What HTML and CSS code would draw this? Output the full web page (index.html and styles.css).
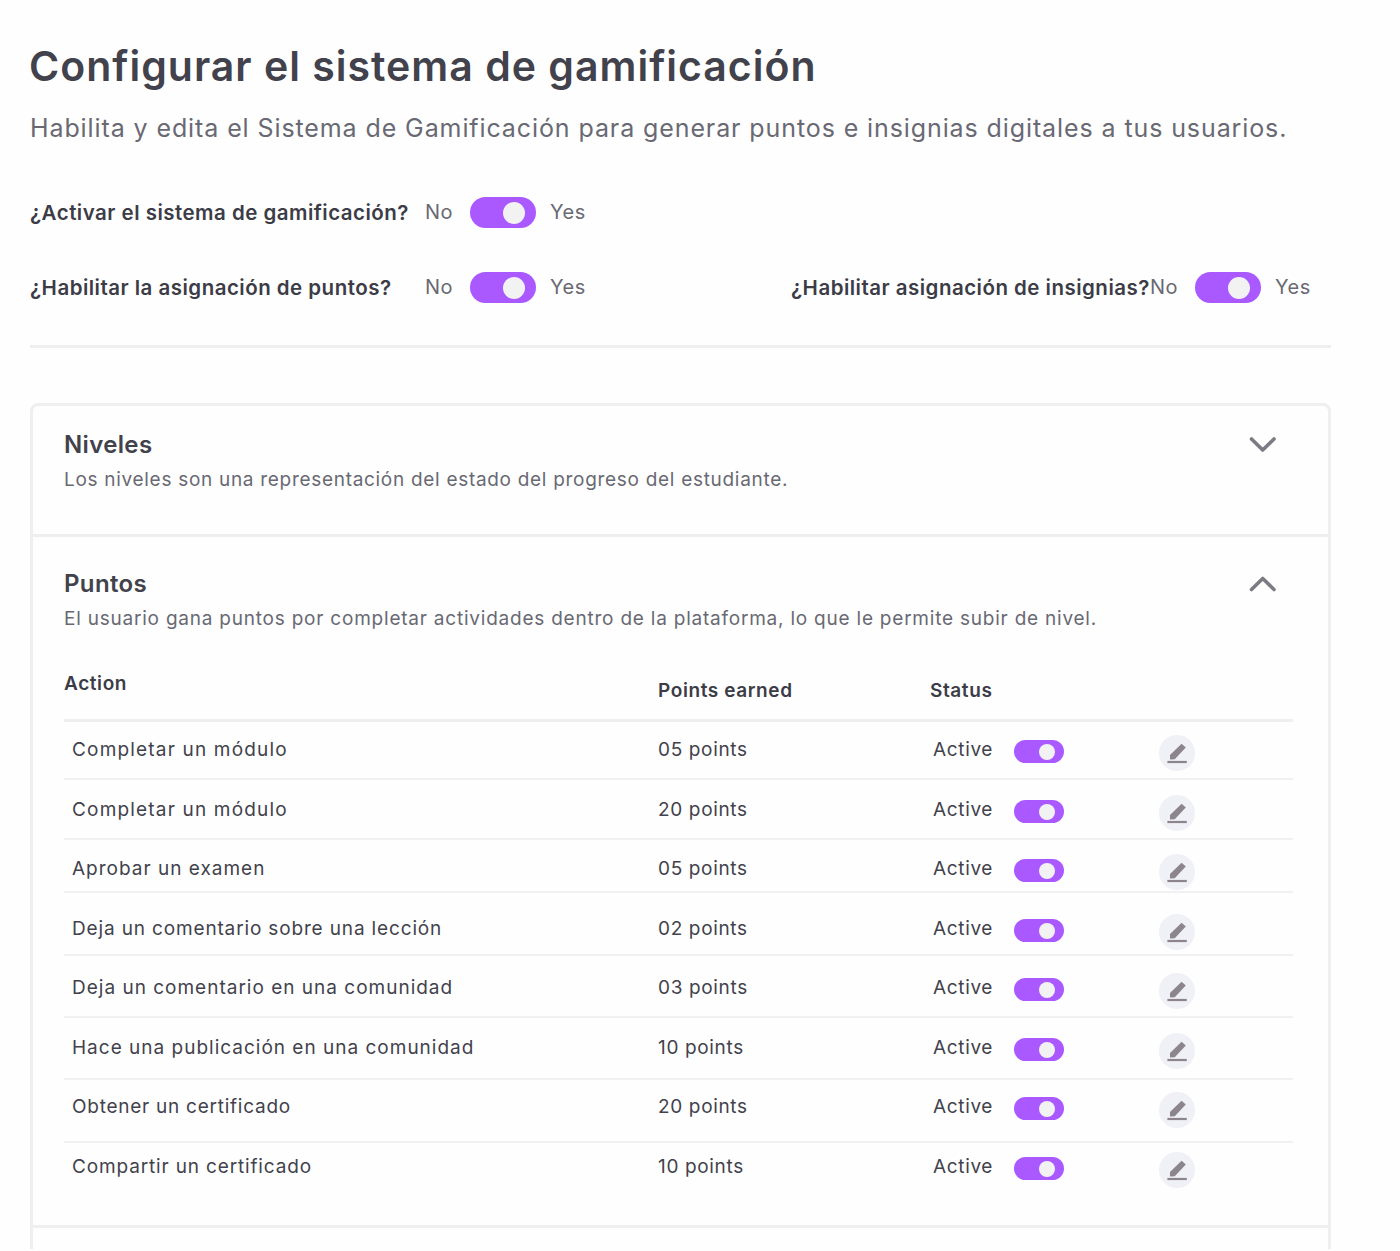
FILE: index.html
```html
<!DOCTYPE html>
<html lang="es">
<head>
    <meta charset="UTF-8">
    <meta name="viewport" content="width=device-width, initial-scale=1.0">
    <title>Sistema de gamificación</title>
    <link rel="stylesheet" href="styles.css">
</head>
<body>

    <!-- Pencil icon shared by every edit button -->
    <svg class="sprite" width="0" height="0">
        <symbol id="icon-edit" viewBox="0 0 36 36">
            <path d="M11 24.5V20L22.6 8.7L26.8 12.6L15.8 24.3Z" fill="#8c858e"/>
            <rect x="8.4" y="25.9" width="19.4" height="2.2" fill="#8c858e"/>
        </symbol>
    </svg>

    <div class="container">
        <h1>Configurar el sistema de gamificación</h1>
        <p class="subtitle">Habilita y edita el Sistema de Gamificación para generar puntos e insignias digitales a tus usuarios.</p>

        <div class="settings">
            <div class="setting">
                <span class="label">¿Activar el sistema de gamificación?</span>
                <span class="no">No</span>
                <span class="toggle"></span>
                <span class="yes">Yes</span>
            </div>
            <div class="setting first-col">
                <span class="label">¿Habilitar la asignación de puntos?</span>
                <span class="no">No</span>
                <span class="toggle"></span>
                <span class="yes">Yes</span>
            </div>
            <div class="setting badges">
                <span class="label">¿Habilitar asignación de insignias?</span>
                <span class="no">No</span>
                <span class="toggle"></span>
                <span class="yes">Yes</span>
            </div>
        </div>

        <div class="card">
            <div class="section levels">
                <div class="section-header">
                    <div>
                        <h2>Niveles</h2>
                        <p class="desc">Los niveles son una representación del estado del progreso del estudiante.</p>
                    </div>
                    <svg class="chevron" width="30" height="20" viewBox="0 0 30 20"><path d="M3.5 4L14.7 15L26 4"/></svg>
                </div>
            </div>

            <div class="section points">
                <div class="section-header">
                    <div>
                        <h2>Puntos</h2>
                        <p class="desc desc-points">El usuario gana puntos por completar actividades dentro de la plataforma, lo que le permite subir de nivel.</p>
                    </div>
                    <svg class="chevron" width="30" height="20" viewBox="0 0 30 20"><path d="M3.5 15.5L14.7 4.5L26 15.5"/></svg>
                </div>

                <div class="points-list">
                    <div class="list-head">
                        <span class="head-action">Action</span>
                        <span>Points earned</span>
                        <span>Status</span>
                    </div>
                    <div class="row">
                        <span class="action">Completar un módulo</span>
                        <span class="earned">05 points</span>
                        <span class="status">Active</span>
                        <span class="toggle small"></span>
                        <span class="edit-btn"><svg width="36" height="36"><use href="#icon-edit"/></svg></span>
                    </div>
                    <div class="row">
                        <span class="action">Completar un módulo</span>
                        <span class="earned">20 points</span>
                        <span class="status">Active</span>
                        <span class="toggle small"></span>
                        <span class="edit-btn"><svg width="36" height="36"><use href="#icon-edit"/></svg></span>
                    </div>
                    <div class="row">
                        <span class="action">Aprobar un examen</span>
                        <span class="earned">05 points</span>
                        <span class="status">Active</span>
                        <span class="toggle small"></span>
                        <span class="edit-btn"><svg width="36" height="36"><use href="#icon-edit"/></svg></span>
                    </div>
                    <div class="row">
                        <span class="action">Deja un comentario sobre una lección</span>
                        <span class="earned">02 points</span>
                        <span class="status">Active</span>
                        <span class="toggle small"></span>
                        <span class="edit-btn"><svg width="36" height="36"><use href="#icon-edit"/></svg></span>
                    </div>
                    <div class="row">
                        <span class="action">Deja un comentario en una comunidad</span>
                        <span class="earned">03 points</span>
                        <span class="status">Active</span>
                        <span class="toggle small"></span>
                        <span class="edit-btn"><svg width="36" height="36"><use href="#icon-edit"/></svg></span>
                    </div>
                    <div class="row">
                        <span class="action">Hace una publicación en una comunidad</span>
                        <span class="earned">10 points</span>
                        <span class="status">Active</span>
                        <span class="toggle small"></span>
                        <span class="edit-btn"><svg width="36" height="36"><use href="#icon-edit"/></svg></span>
                    </div>
                    <div class="row">
                        <span class="action">Obtener un certificado</span>
                        <span class="earned">20 points</span>
                        <span class="status">Active</span>
                        <span class="toggle small"></span>
                        <span class="edit-btn"><svg width="36" height="36"><use href="#icon-edit"/></svg></span>
                    </div>
                    <div class="row">
                        <span class="action">Compartir un certificado</span>
                        <span class="earned">10 points</span>
                        <span class="status">Active</span>
                        <span class="toggle small"></span>
                        <span class="edit-btn"><svg width="36" height="36"><use href="#icon-edit"/></svg></span>
                    </div>
                </div>
            </div>
        </div>
    </div>

</body>
</html>
```
FILE: styles.css
```css
* {
    box-sizing: border-box;
}
body {
    margin: 0;
    background-color: #fefefe;
    font-family: Inter, "Open Sans", sans-serif;
    color: #42424c;
}
h1, h2, p {
    margin: 0;
}
.sprite {
    display: block;
}
.container {
    width: 1331px;
    height: 1249px;
    padding-top: 41px;
    padding-left: 30px;
    overflow: hidden;
}
h1 {
    margin-left: -1px;
    font-size: 41px;
    font-weight: 600;
    line-height: 50px;
    letter-spacing: 1px;
    white-space: nowrap;
}
.subtitle {
    margin-top: 21px;
    font-size: 25px;
    line-height: 32px;
    letter-spacing: 0.9px;
    white-space: nowrap;
    color: #696973;
}

/* Settings */
.settings {
    display: grid;
    grid-template-columns: 761px 1fr;
    row-gap: 44px;
    margin-top: 53px;
    padding-bottom: 42px;
    border-bottom: 3px solid #efefef;
}
.setting {
    display: flex;
    align-items: center;
    height: 31px;
    font-size: 20px;
    letter-spacing: 0.5px;
    white-space: nowrap;
    color: #696973;
}
.first-col {
    grid-column: 1;
}
.label {
    width: 395px;
    padding-bottom: 1px;
    font-size: 20.5px;
    font-weight: 600;
    letter-spacing: 0.48px;
    color: #3c3c47;
}
.badges .label {
    width: 359px;
}
.no {
    width: 45px;
    padding-bottom: 1px;
}
.yes {
    margin-left: 14px;
    padding-bottom: 1px;
}
.toggle {
    display: flex;
    align-items: center;
    justify-content: flex-end;
    width: 66px;
    height: 31px;
    padding-right: 11px;
    border-radius: 16px;
    background-color: #a959ff;
}
.toggle::after {
    content: "";
    width: 22px;
    height: 22px;
    border-radius: 50%;
    background-color: #f3f2f3;
}
.toggle.small {
    width: 50px;
    height: 23px;
    padding-right: 9px;
    margin-top: 5px;
    border-radius: 12px;
}
.toggle.small::after {
    width: 16px;
    height: 16px;
}

/* Sections */
.card {
    height: 900px;
    margin-top: 55px;
    border: 3px solid #efefef;
    border-radius: 8px;
}
.section {
    padding: 0 35px 0 31px;
    border-bottom: 3px solid #efefef;
}
.levels {
    height: 131px;
    padding-top: 23px;
}
.points {
    height: 691px;
    padding-top: 31px;
}
.section-header {
    display: flex;
    justify-content: space-between;
    padding-right: 15px;
    white-space: nowrap;
}
h2 {
    font-size: 24px;
    font-weight: 600;
    line-height: 32px;
    letter-spacing: 0.35px;
}
.desc {
    margin-top: 4px;
    font-size: 19px;
    line-height: 30px;
    letter-spacing: 0.7px;
    color: #696973;
}
.desc-points {
    letter-spacing: 0.78px;
}
.chevron {
    margin-top: 6px;
    fill: none;
    stroke: #7b7b84;
    stroke-width: 3.6;
    stroke-linecap: round;
    stroke-linejoin: round;
}

/* Points list */
.points-list {
    margin-top: 37px;
    font-size: 19px;
    line-height: 28px;
    white-space: nowrap;
}
.list-head {
    display: grid;
    grid-template-columns: 594px 272px 1fr;
    height: 51px;
    padding-top: 6px;
    border-bottom: 3px solid #efefef;
    font-weight: 600;
    letter-spacing: 0.6px;
    color: #3c3c47;
}
.head-action {
    margin-top: -7px;
}
.row {
    display: grid;
    grid-template-columns: 594px 275px 81px 145px 36px;
    align-items: start;
    height: 62px;
    padding-top: 13px;
    border-bottom: 2px solid #f1f1f1;
    letter-spacing: 0.65px;
}
.action, .earned, .status {
    padding-top: 1px;
}
.row .action {
    padding-left: 8px;
    letter-spacing: 1px;
}
.edit-btn {
    height: 36px;
    border-radius: 50%;
    background-color: #f0f0f7;
}
.edit-btn svg {
    display: block;
}
.row:nth-child(2) {
    height: 58px;
}
.row:nth-child(2) .action, .row:nth-child(3) .action {
    letter-spacing: 1.18px;
}
.row:nth-child(3) {
    height: 60px;
    padding-top: 15px;
}
.row:nth-child(4) {
    height: 53px;
    padding-top: 14px;
}
.row:nth-child(5) {
    height: 63px;
    padding-top: 21px;
}
.row:nth-child(5) .action, .row:nth-child(9) .action {
    letter-spacing: 0.85px;
}
.row:nth-child(6) {
    padding-top: 17px;
}
.row:nth-child(7) {
    padding-top: 15px;
}
.row:nth-child(8) {
    height: 63px;
    padding-top: 12px;
}
.row:nth-child(8) .action {
    letter-spacing: 0.75px;
}
.row:nth-child(9) {
    padding-top: 9px;
    border-bottom: none;
}
```
